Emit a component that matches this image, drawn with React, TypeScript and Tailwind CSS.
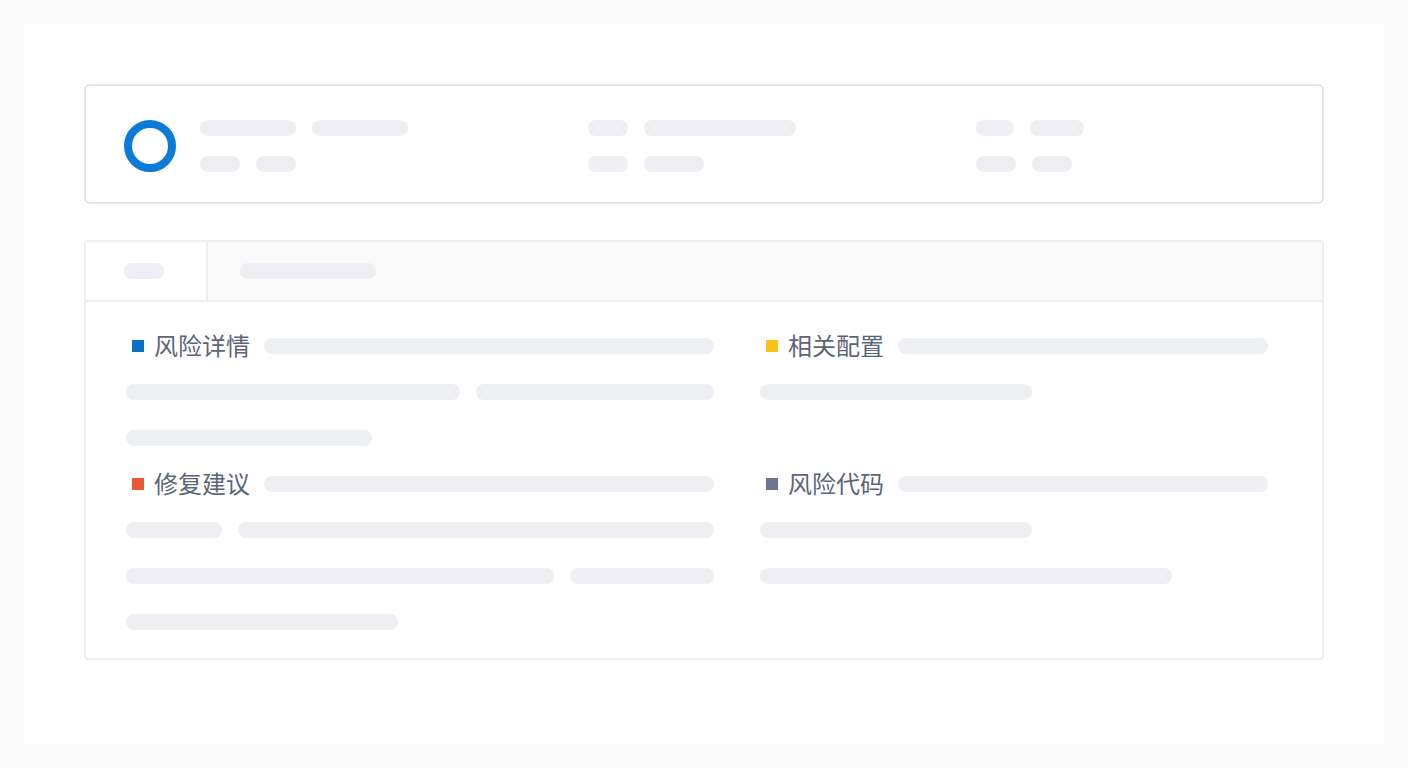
import React from 'react';

// Barra de esqueleto genérica
const Bar = ({ w }: { w: string }) => (
  <div className={`h-4 shrink-0 rounded-full bg-[#eeeff3] ${w}`}></div>
);

const SectionTitle = ({ title, color }: { title: string; color: string }) => (
  <div className="flex h-4 items-center">
    <span className={`ml-[6px] h-3 w-3 shrink-0 ${color}`}></span>
    <span className="ml-[10px] whitespace-nowrap text-[24px] leading-none text-[#5c6479]">{title}</span>
    <div className="ml-[14px] h-4 flex-1 rounded-full bg-[#eeeff3]"></div>
  </div>
);

const App = () => {
  return (
    <div
      className="min-h-screen bg-[#fafafa] p-6"
      style={{ fontFamily: '"Noto Sans", "Noto Sans CJK SC", sans-serif' }}
    >
      <div className="h-[720px] bg-white px-[60px] pt-[60px]">
        {/* Cabeçalho com resumo */}
        <div className="flex h-[120px] rounded-md border-2 border-[#e4e4e4] pl-[38px] pt-[34px]">
          <div className="h-[52px] w-[52px] shrink-0 rounded-full border-[8px] border-[#0a7bd6]"></div>
          <div className="ml-6 flex">
            <div className="flex w-[388px] shrink-0 flex-col gap-5">
              <div className="flex gap-4">
                <Bar w="w-24" />
                <Bar w="w-24" />
              </div>
              <div className="flex gap-4">
                <Bar w="w-10" />
                <Bar w="w-10" />
              </div>
            </div>
            <div className="flex w-[388px] shrink-0 flex-col gap-5">
              <div className="flex gap-4">
                <Bar w="w-10" />
                <Bar w="w-[152px]" />
              </div>
              <div className="flex gap-4">
                <Bar w="w-10" />
                <Bar w="w-[60px]" />
              </div>
            </div>
            <div className="flex w-[300px] shrink-0 flex-col gap-5">
              <div className="flex gap-4">
                <Bar w="w-[38px]" />
                <Bar w="w-[54px]" />
              </div>
              <div className="flex gap-4">
                <Bar w="w-10" />
                <Bar w="w-10" />
              </div>
            </div>
          </div>
        </div>

        {/* Painel com abas */}
        <div className="mt-9 rounded-sm border-2 border-[#eeeef2]">
          <div className="flex h-[60px] border-b-2 border-[#eeeef2] bg-[#fafafa]">
            <div className="flex w-[122px] items-center border-r-2 border-[#eeeef2] bg-white pl-[38px]">
              <Bar w="w-10" />
            </div>
            <div className="ml-8 flex items-center">
              <Bar w="w-[136px]" />
            </div>
          </div>

          <div className="grid grid-cols-[588px_508px] gap-x-[46px] gap-y-[30px] pb-7 pl-10 pt-9">
            <div className="flex flex-col gap-[30px]">
              <SectionTitle title="风险详情" color="bg-[#0b6fc4]" />
              <div className="flex gap-4">
                <Bar w="w-[334px]" />
                <Bar w="w-[238px]" />
              </div>
              <Bar w="w-[246px]" />
            </div>
            <div className="flex flex-col gap-[30px]">
              <SectionTitle title="相关配置" color="bg-[#f7c21a]" />
              <Bar w="w-[272px]" />
            </div>
            <div className="flex flex-col gap-[30px]">
              <SectionTitle title="修复建议" color="bg-[#e8593a]" />
              <div className="flex gap-4">
                <Bar w="w-24" />
                <Bar w="w-[476px]" />
              </div>
              <div className="flex gap-4">
                <Bar w="w-[428px]" />
                <Bar w="w-36" />
              </div>
              <Bar w="w-[272px]" />
            </div>
            <div className="flex flex-col gap-[30px]">
              <SectionTitle title="风险代码" color="bg-[#6b7592]" />
              <Bar w="w-[272px]" />
              <Bar w="w-[412px]" />
            </div>
          </div>
        </div>
      </div>
    </div>
  );
};

export default App;
